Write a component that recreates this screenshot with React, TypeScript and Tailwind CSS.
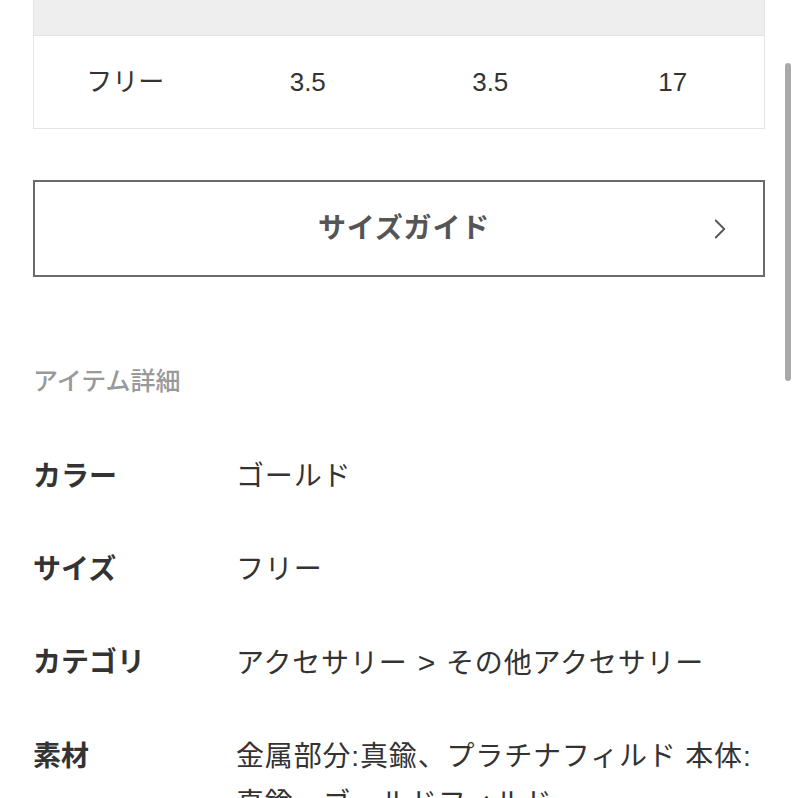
import { ChevronRight } from "lucide-react";

const sizeHeaders = ["サイズ", "高さ", "幅", "全長"];
const sizeRow = ["フリー", "3.5", "3.5", "17"];

const details: { label: string; value: React.ReactNode }[] = [
  { label: "カラー", value: "ゴールド" },
  { label: "サイズ", value: "フリー" },
  {
    label: "カテゴリ",
    value: (
      <>
        アクセサリー<span className="mx-[10px] text-[30px]">&gt;</span>その他アクセサリー
      </>
    ),
  },
  { label: "素材", value: "金属部分:真鍮、プラチナフィルド 本体: 真鍮、ゴールドフィルド" },
];

export default function App() {
  return (
    <div
      className="relative h-[798px] w-[798px] overflow-hidden bg-white text-[#333]"
      style={{ fontFamily: '"Liberation Sans", "Noto Sans CJK JP", sans-serif' }}
    >
      <div className="px-[33px]">
        {/* size table, header scrolled mostly out of view */}
        <div className="-mt-[51px] border border-[#e4e4e4]">
          <div className="grid h-[86px] grid-cols-4 items-center border-b border-[#e4e4e4] bg-[#eeeeee] text-[22px] text-[#999]">
            {sizeHeaders.map((h) => (
              <div key={h} className="-mt-[7px] text-center">
                {h}
              </div>
            ))}
          </div>
          <div className="grid h-[92px] grid-cols-4 items-center text-[26px] text-[#333]">
            {sizeRow.map((v, i) => (
              <div key={i} className="text-center">
                {v}
              </div>
            ))}
          </div>
        </div>

        <button
          type="button"
          className="relative mt-[51px] flex h-[97px] w-full items-center justify-center border-2 border-[#6b6b6b] pl-[10px] text-[28px] font-bold tracking-[0.03em] text-[#555]"
        >
          サイズガイド
          <ChevronRight className="absolute right-[26px] top-1/2 h-[34px] w-[34px] -translate-y-1/2 text-[#555]" strokeWidth={1.3} />
        </button>

        <div className="mt-[89px] text-[25px] font-medium leading-[30px] text-[#999]">アイテム詳細</div>

        <div className="mt-[57px] flex flex-col gap-[46px]">
          {details.map((d) => (
            <div key={d.label} className="flex text-[28px] leading-[47px]">
              <div className="w-[203px] shrink-0 font-bold text-[#333]">{d.label}</div>
              <div className="tracking-[0.03em] text-[#333]">{d.value}</div>
            </div>
          ))}
        </div>
      </div>

      <div className="absolute left-[785px] top-[63px] h-[318px] w-[6px] rounded-full bg-[#a9a9a9]" />
    </div>
  );
}
